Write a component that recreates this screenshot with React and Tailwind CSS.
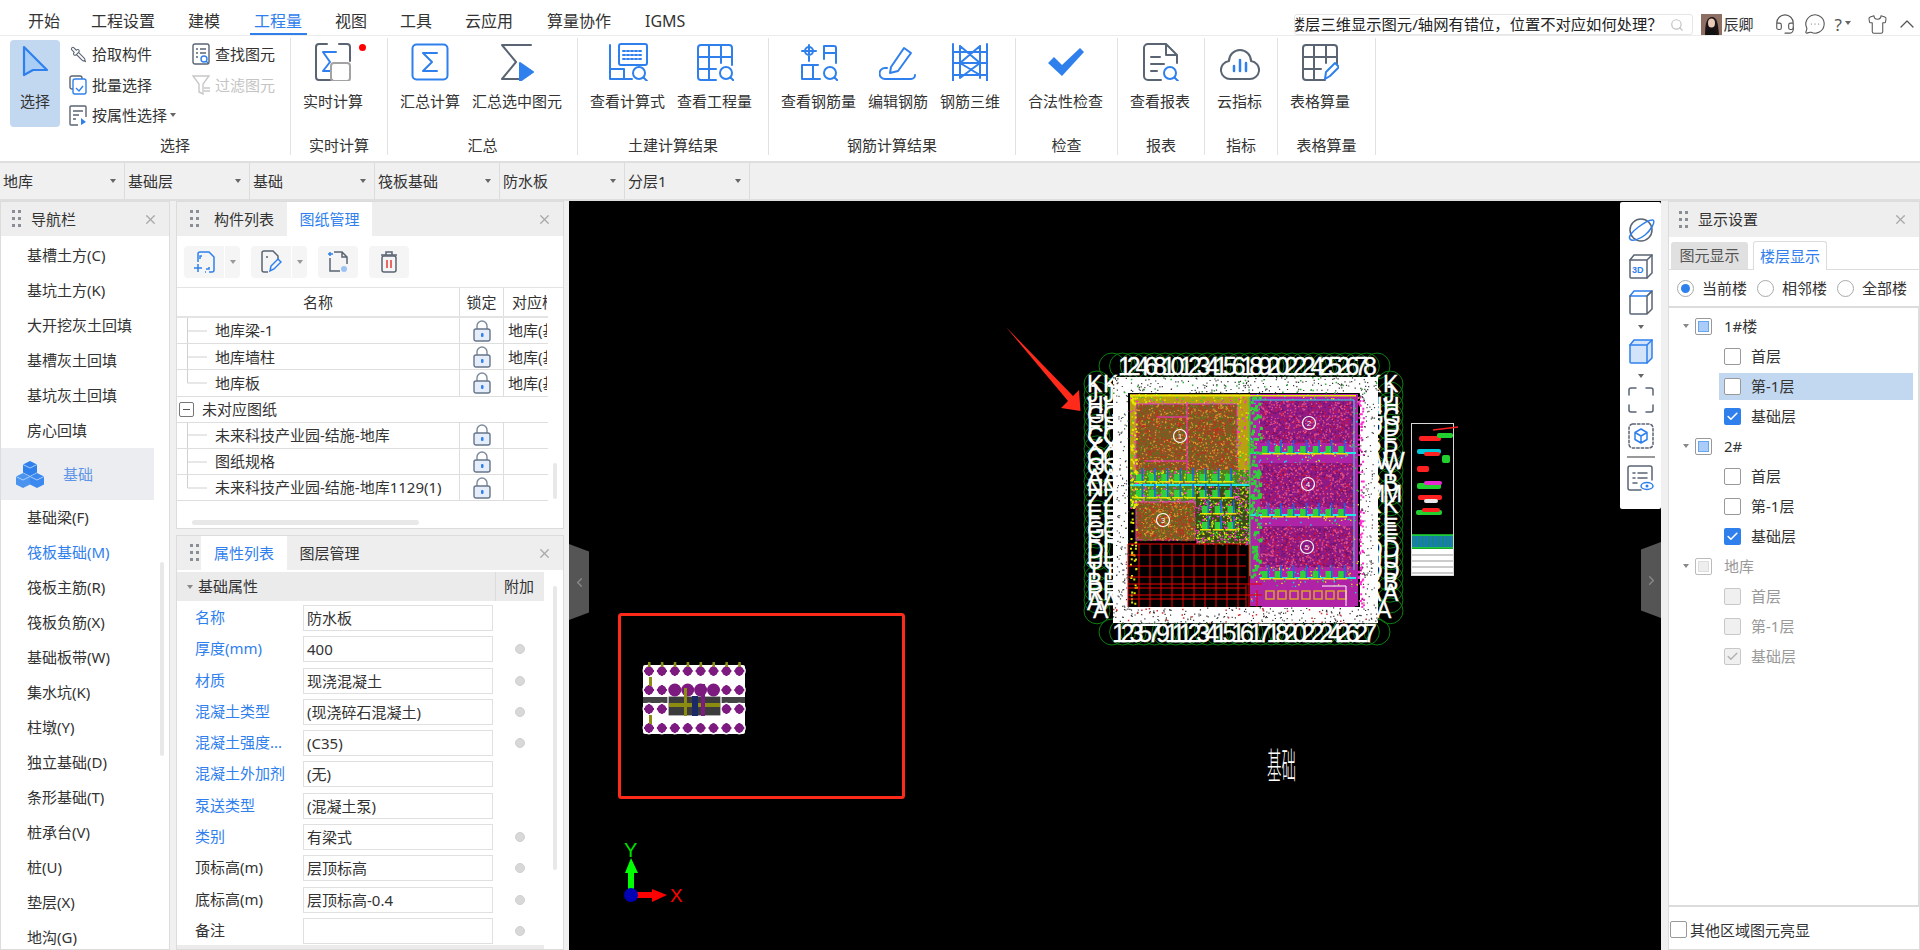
import { Headset, MessageCircleMore, Shirt, ChevronUp, ChevronLeft, ChevronRight, Search, X, Check, Pipette } from 'lucide-react';

const BLUE = '#2f80ed';
const GRAY = '#5a6473';

function Tri({ color = 'border-t-[#666]' }) {
  return <span className={`inline-block h-0 w-0 border-x-[3.5px] border-t-[4px] border-x-transparent ${color}`} />;
}

function Grip() {
  return (
    <svg width="9" height="18" viewBox="0 0 9 18" fill="#8a8f96">
      {[0, 7, 14].map(y => <g key={y}><rect x="0" y={y} width="3" height="3" /><rect x="6" y={y} width="3" height="3" /></g>)}
    </svg>
  );
}

function Ico({ w = 38, h = 38, vb = '0 0 38 38', children }) {
  return <svg width={w} height={h} viewBox={vb} fill="none" strokeWidth="2" strokeLinecap="round" strokeLinejoin="round">{children}</svg>;
}

function Lens({ cx = 29, cy = 30, r = 6, c = BLUE }) {
  return <g stroke={c}><circle cx={cx} cy={cy} r={r} /><path d={`M${cx + r * 0.75} ${cy + r * 0.75}l3.5 3.5`} /></g>;
}

const icons = {
  live: (
    <Ico w={38} h={38}>
      <path d="M13 1H5a3 3 0 0 0-3 3v30a3 3 0 0 0 3 3h8M25 1h8a3 3 0 0 1 3 3v14M18 37h-5" stroke={GRAY} />
      <path d="M22 9H9l7 10-7 9h7" stroke={BLUE} />
      <rect x="17" y="20" width="19" height="18" rx="3" stroke="#a3a3a3" />
    </Ico>
  ),
  sum: (
    <Ico>
      <rect x="1.5" y="1.5" width="35" height="35" rx="4" stroke={BLUE} />
      <path d="M26 10H12l9 9-9 9h14" stroke={BLUE} />
    </Ico>
  ),
  sumSel: (
    <Ico w={36} h={38} vb="0 0 36 38">
      <path d="M32 2H3l14 17L3 36h17" stroke={GRAY} />
      <path d="M21 20l13 9-13 9z" fill={BLUE} stroke={BLUE} />
    </Ico>
  ),
  formula: (
    <Ico w={40} h={38} vb="0 0 40 38">
      <path d="M2 2v34h22M2 26h14v10" stroke={BLUE} />
      <rect x="11" y="1" width="28" height="21" rx="2" stroke={BLUE} />
      <path d="M15 8h20M15 12h20M15 16h20" stroke={BLUE} strokeDasharray="2 2" />
      <Lens cx={31} cy={30} />
    </Ico>
  ),
  qty: (
    <Ico>
      <path d="M20 37H5a3 3 0 0 1-3-3V5a3 3 0 0 1 3-3h28a3 3 0 0 1 3 3v17M2 14h34M2 26h18M13 2v35M25 2v18" stroke={BLUE} />
      <Lens cx={30} cy={30} />
    </Ico>
  ),
  rebar: (
    <Ico>
      <path d="M13 8a4 4 0 1 0-8 0 4 4 0 1 0 8 0M9 2v16M2 8h14M2 22h16M2 36h18M2 22v14M13 22v14M24 16V3h10a2 2 0 0 1 2 2v15M24 10h12" stroke={BLUE} />
      <Lens cx={30} cy={30} />
    </Ico>
  ),
  editRebar: (
    <Ico>
      <path d="M12 24 25 5l7 5-13 18-8 2z" stroke={BLUE} />
      <path d="M8 25H6a5 5 0 0 0 0 11h26a4 4 0 0 0 4-4" stroke={BLUE} />
    </Ico>
  ),
  rebar3d: (
    <Ico>
      <path d="M2 1v37M36 1v37M9 3v32M29 3v32M2 9h34M2 20h34M2 32h34M9 20 29 3M9 35 29 20M9 20l20 12M9 3l20 17" stroke={BLUE} />
    </Ico>
  ),
  check: (
    <svg width="38" height="38" viewBox="0 0 38 38"><path d="M1 20l6-6 8 8L33 5l4 4-22 24z" fill={BLUE} /></svg>
  ),
  report: (
    <Ico>
      <path d="M20 37H7a4 4 0 0 1-4-4V5a4 4 0 0 1 4-4h18l11 11v8M25 1v11h11M10 14h9M10 21h13M10 28h6" stroke={GRAY} />
      <Lens cx={29} cy={30} />
    </Ico>
  ),
  cloud: (
    <Ico w={40} h={38} vb="0 0 40 38">
      <path d="M11 36a9 9 0 0 1-2-18 11 11 0 0 1 22 0 9 9 0 0 1-2 18z" stroke={GRAY} />
      <path d="M14 23v5M20 17v11M26 20v8" stroke={BLUE} strokeWidth="2.5" />
    </Ico>
  ),
  table: (
    <Ico>
      <path d="M24 37H5a3 3 0 0 1-3-3V5a3 3 0 0 1 3-3h28a3 3 0 0 1 3 3v16M2 14h34M2 26h18M13 2v35M25 2v18" stroke={GRAY} />
      <path d="M24 36l1-7 9-9 4 4-9 9z" stroke={BLUE} />
    </Ico>
  ),
  batch: (
    <svg width="18" height="20" viewBox="0 0 18 20" fill="none" strokeWidth="1.4">
      <rect x="1" y="1" width="12" height="13" rx="2" stroke={GRAY} />
      <rect x="4" y="4" width="13" height="15" rx="2" stroke={BLUE} fill="#fff" />
      <path d="M7 13l3 3 4-5" stroke={BLUE} />
    </svg>
  ),
  attr: (
    <svg width="18" height="21" viewBox="0 0 18 21" fill="none" strokeWidth="1.4">
      <path d="M9 20H2a1 1 0 0 1-1-1V2a1 1 0 0 1 1-1h14a1 1 0 0 1 1 1v10M4 6h10M4 10h6M4 14h3" stroke={GRAY} />
      <path d="M12 13l5 4-5 3z" fill={BLUE} />
    </svg>
  ),
  find: (
    <svg width="18" height="22" viewBox="0 0 18 22" fill="none" strokeWidth="1.4">
      <rect x="1" y="1" width="16" height="20" rx="2" stroke={GRAY} />
      <path d="M4 6h2M8 6h6M4 10h2M8 10h6M4 14h2" stroke={GRAY} />
      <circle cx="12" cy="16" r="3" stroke={BLUE} fill="#fff" />
      <path d="M14 18l2 2" stroke={BLUE} />
    </svg>
  ),
  filter: (
    <svg width="18" height="20" viewBox="0 0 18 20" fill="none" strokeWidth="1.4" stroke="#c8c8c8">
      <path d="M1 1h16l-6 8v10l-4-2V9z" />
      <path d="M12 13h6M12 16h6" />
    </svg>
  ),
};

function BigTool({ icon, label, children }) {
  return (
    <div className="flex flex-col items-center pt-[5px]">
      <div className="relative flex h-[38px] items-center justify-center">{icon}{children}</div>
      <div className="mt-[9px] whitespace-nowrap leading-[22px]">{label}</div>
    </div>
  );
}

function Group({ w, label, children }) {
  return (
    <div className={`flex h-[117px] flex-col border-r border-[#e2e2e2] ${w}`}>
      <div className="flex flex-1 gap-3 pl-3">{children}</div>
      <div className="mb-[2px] h-4 text-center leading-4">{label}</div>
    </div>
  );
}

function SmallTool({ icon, label, className = '', children }) {
  return (
    <div className={`flex h-[30.5px] items-center ${className}`}>
      <span className="flex w-[18px] justify-center">{icon}</span>
      <span className="ml-[5px] whitespace-nowrap">{label}</span>
      {children}
    </div>
  );
}

function TopBar() {
  const tabs = [['开始', 'w-[33px] ml-[28px]'], ['工程设置', 'w-[65px] ml-[30px]'], ['建模', 'w-[33px] ml-[32px]'], ['工程量', 'w-[49px] ml-[33px]'], ['视图', 'w-[33px] ml-[32px]'], ['工具', 'w-[33px] ml-[32px]'], ['云应用', 'w-[49px] ml-[32px]'], ['算量协作', 'w-[65px] ml-[33px]'], ['IGMS', 'w-[44px] ml-[33px]']];
  return (
    <div className="flex h-[36px] items-start border-b border-[#ececec] bg-white">
      {tabs.map(([t, c]) => (
        <div key={t} className={`relative h-[35px] whitespace-nowrap pt-[10px] text-[16px] leading-[22px] ${c} ${t === '工程量' ? 'text-[#2f80ed]' : 'text-[#333]'}`}>
          {t}
          {t === '工程量' && <div className="absolute bottom-0 -left-1 -right-1 h-[2.5px] bg-[#2f80ed]" />}
        </div>
      ))}
      <div className="ml-auto mt-[12px] flex items-center">
        <div className="relative h-[21px] w-[399px] overflow-hidden rounded-[3px] border border-[#e5e5e5]">
          <span className="absolute right-[29px] top-0 whitespace-nowrap text-[15.3px] leading-[19px] text-[#222]">楼层三维显示图元/轴网有错位，位置不对应如何处理？</span>
          <Search className="absolute right-[8px] top-[3px] text-[#c2c2c2]" size={14} />
        </div>
        <svg className="ml-[8px]" width="21" height="21" viewBox="0 0 21 21">
          <rect width="21" height="21" fill="#8d6f63" />
          <path d="M4 21c0-12 2-18 7-18s6 6 7 18z" fill="#1c1414" />
          <ellipse cx="10.5" cy="9" rx="3.5" ry="4.5" fill="#e9c9b8" />
          <path d="M5 21c1-5 3-6 5.500-6s4.500 1 5.500 6z" fill="#111" />
        </svg>
        <span className="ml-[2px] mr-[20px] w-[30px] whitespace-nowrap text-[15px] text-[#333]">辰卿</span>
        <Headset size={22} strokeWidth={1.2} className="text-[#555]" />
        <MessageCircleMore size={22} strokeWidth={1.2} className="ml-[8px] text-[#555]" />
        <span className="ml-[9px] text-[17px] leading-none text-[#555]">?</span>
        <span className="ml-[3px] mt-[-2px] flex"><Tri /></span>
        <Shirt size={21} strokeWidth={1.2} className="ml-[16px] text-[#555]" />
        <ChevronUp size={24} strokeWidth={1.3} className="ml-[7px] mr-[1px] text-[#555]" />
      </div>
    </div>
  );
}

function Ribbon() {
  return (
    <div className="flex h-[125px] items-start bg-white pt-[2px]">
      <div className="flex h-[117px] w-[291px] flex-col border-r border-[#e2e2e2]">
        <div className="flex flex-1 pl-[10px] pt-[1px]">
          <div className="mt-[1px] flex h-[87px] w-[50px] flex-col items-center rounded-[4px] bg-[#c2d8f0] pt-[5px]">
            <svg width="27" height="32" viewBox="0 0 27 32" fill="#a9cdf5" stroke={BLUE} strokeWidth="2.2" strokeLinejoin="round"><path d="M2 2l23 23H11L2 30z" /></svg>
            <div className="mt-[13px] leading-[22px]">选择</div>
          </div>
          <div className="ml-[9px] flex w-[123px] flex-col">
            <SmallTool icon={<Pipette size={17} strokeWidth={1.5} className="scale-x-[-1] text-[#5a6473]" />} label="拾取构件" />
            <SmallTool icon={icons.batch} label="批量选择" />
            <SmallTool icon={icons.attr} label="按属性选择"><span className="ml-[3px] flex"><Tri /></span></SmallTool>
          </div>
          <div className="flex flex-col">
            <SmallTool icon={icons.find} label="查找图元" />
            <SmallTool icon={icons.filter} label="过滤图元" className="text-[#c4c4c4]" />
          </div>
        </div>
        <div className="mb-[2px] h-4 pl-[60px] text-center leading-4">选择</div>
      </div>
      <Group w="w-[97px]" label="实时计算">
        <BigTool icon={icons.live} label="实时计算">
          <span className="absolute -right-[14px] top-[1px] h-[7px] w-[7px] rounded-full bg-[#ff0000]" />
        </BigTool>
      </Group>
      <Group w="w-[190px]" label="汇总">
        <BigTool icon={icons.sum} label="汇总计算" />
        <BigTool icon={icons.sumSel} label="汇总选中图元" />
      </Group>
      <Group w="w-[191px]" label="土建计算结果">
        <BigTool icon={icons.formula} label="查看计算式" />
        <BigTool icon={icons.qty} label="查看工程量" />
      </Group>
      <Group w="w-[247px]" label="钢筋计算结果">
        <BigTool icon={icons.rebar} label="查看钢筋量" />
        <BigTool icon={icons.editRebar} label="编辑钢筋" />
        <BigTool icon={icons.rebar3d} label="钢筋三维" />
      </Group>
      <Group w="w-[102px]" label="检查">
        <BigTool icon={icons.check} label="合法性检查" />
      </Group>
      <Group w="w-[87px]" label="报表">
        <BigTool icon={icons.report} label="查看报表" />
      </Group>
      <Group w="w-[73px]" label="指标">
        <BigTool icon={icons.cloud} label="云指标" />
      </Group>
      <Group w="w-[98px]" label="表格算量">
        <BigTool icon={icons.table} label="表格算量" />
      </Group>
    </div>
  );
}

function ComboRow() {
  return (
    <div className="flex h-[40px] border-y-2 border-t-[#dedede] border-b-[#dedede] bg-[#f0f0f0]">
      {['地库', '基础层', '基础', '筏板基础', '防水板', '分层1'].map(t => (
        <div key={t} className="flex w-[125px] items-center justify-between border-r border-[#dcdcdc] pl-[3px] pr-[8px]">
          <span>{t}</span><Tri />
        </div>
      ))}
    </div>
  );
}

const navTop = ['基槽土方(C)', '基坑土方(K)', '大开挖灰土回填', '基槽灰土回填', '基坑灰土回填', '房心回填'];
const navBottom = ['基础梁(F)', '筏板基础(M)', '筏板主筋(R)', '筏板负筋(X)', '基础板带(W)', '集水坑(K)', '柱墩(Y)', '独立基础(D)', '条形基础(T)', '桩承台(V)', '桩(U)', '垫层(X)', '地沟(G)'];

function NavPanel() {
  return (
    <div className="relative w-[170px] overflow-hidden border border-[#dcdcdc] bg-white">
      <div className="flex h-[34px] items-center bg-[#eeeeee] pl-[11px] pr-[11px]">
        <Grip /><span className="ml-[10px]">导航栏</span><X size={15} className="ml-auto text-[#a8a8a8]" />
      </div>
      <div className="pt-[2px]">
        {navTop.map(t => <div key={t} className="flex h-[35px] items-center pl-[26px]">{t}</div>)}
      </div>
      <div className="flex h-[52px] w-[153px] items-center bg-[#ebedf0] pl-[14px]">
        <svg width="30" height="28" viewBox="0 0 30 28">
          <path d="M15 1l7 3.500v8L15 16l-7-3.500v-8z" fill="#2f80ed" />
          <path d="M8 13l7 3.500v8L8 28l-7-3.500v-8z" fill="#4a94f0" />
          <path d="M22 13l7 3.500v8L22 28l-7-3.500v-8z" fill="#3b88ee" />
          <path d="M8 4.500l7 3.500 7-3.500M1 16.500l7 3.500 7-3.500 7 3.500 7-3.500" stroke="#a8cdf8" fill="none" />
        </svg>
        <span className="ml-[18px] text-[#5f95e8]">基础</span>
      </div>
      {navBottom.map(t => (
        <div key={t} className={`flex h-[35px] items-center pl-[26px] ${t.startsWith('筏板基础') ? 'text-[#2f80ed]' : ''}`}>{t}</div>
      ))}
      <div className="absolute left-[159px] top-[360px] h-[194px] w-[4px] rounded bg-[#e8e8e8]" />
    </div>
  );
}

function PanelHead({ tabs, active }) {
  return (
    <div className="flex h-[34px] items-stretch bg-[#eeeeee]">
      <div className="flex w-[24px] items-center justify-end pr-[2px]"><Grip /></div>
      {tabs.map((t, i) => (
        <div key={t} className={`flex items-center justify-center ${i === 0 ? 'w-[86px]' : 'w-[85px]'} ${i === active ? 'bg-white text-[#2f80ed]' : ''}`}>{t}</div>
      ))}
      <X size={15} className="ml-auto mr-[11px] self-center text-[#a8a8a8]" />
    </div>
  );
}

function Lock() {
  return (
    <svg width="18" height="22" viewBox="0 0 18 22" fill="none">
      <path d="M4 10V6a5 5 0 0 1 10 0v4" stroke="#7d8a9c" strokeWidth="1.400" />
      <rect x="1" y="9" width="16" height="12" rx="2" fill="#e4edf9" stroke="#66758a" strokeWidth="1.400" />
      <rect x="8" y="13" width="2.500" height="4" rx="1" fill="#2f80ed" />
    </svg>
  );
}

function Branch({ last }) {
  return (
    <svg className="shrink-0" width="20" height="26" viewBox="0 0 20 26" stroke="#d0d0d0" fill="none">
      <path d={last ? 'M0.500 0V13H20' : 'M0.500 0V26M0 13H20'} />
    </svg>
  );
}

function DrawingRow({ name, floor, last }) {
  return (
    <div className="flex h-[26.2px] items-center border-b border-[#dedede]">
      <div className="flex h-full w-[283px] items-center overflow-hidden whitespace-nowrap border-r border-[#dedede] pl-[10px]">
        <Branch last={last} /><span className="ml-[8px]">{name}</span>
      </div>
      <div className="flex h-full w-[44px] items-center justify-center border-r border-[#dedede]"><Lock /></div>
      <div className="flex w-[43px] overflow-hidden whitespace-nowrap pl-[4px]">{floor}</div>
    </div>
  );
}

function ToolBtn({ icon, caret }) {
  return (
    <div className="flex h-[32px]">
      <div className={`flex w-[40px] items-center justify-center bg-[#f5f5f5] ${caret ? 'rounded-l-[4px]' : 'rounded-[4px]'}`}>{icon}</div>
      {caret && <div className="ml-[1px] flex w-[15px] items-center justify-center rounded-r-[4px] bg-[#f5f5f5]"><Tri color="border-t-[#999]" /></div>}
    </div>
  );
}

function DrawingPanel() {
  const b1 = (
    <svg width="22" height="22" viewBox="0 0 22 22" fill="none" stroke={BLUE} strokeWidth="1.500">
      <path d="M5 11V3a2 2 0 0 1 2-2h9l5 5v13a2 2 0 0 1-2 2h-3M16 16v2h-3M1 17h8M5 13v8M9 5H7v3M13 21h-1" />
    </svg>
  );
  const b2 = (
    <svg width="22" height="24" viewBox="0 0 22 24" fill="none" strokeWidth="1.500">
      <path d="M8 22H4a2 2 0 0 1-2-2V3a2 2 0 0 1 2-2h9l5 5v4M7 6v2" stroke={GRAY} />
      <path d="M10 21l1-5 7-7 3 3-7 7z" stroke={BLUE} />
    </svg>
  );
  const b3 = (
    <svg width="22" height="22" viewBox="0 0 22 22" fill="none" strokeWidth="1.500">
      <path d="M3 7v13h10M7 1h8l5 5v7M20 6h-5V1" stroke={GRAY} />
      <path d="M1 3h5M3 1v4" stroke={BLUE} />
      <circle cx="17" cy="18" r="3" fill="#9cc3f5" />
    </svg>
  );
  const b4 = (
    <svg width="18" height="22" viewBox="0 0 18 22" fill="none" strokeWidth="1.500">
      <rect x="2" y="5" width="14" height="16" rx="2" stroke={GRAY} />
      <path d="M1 4h16M6 4V1h6v3" stroke={GRAY} />
      <path d="M7 9v8M11 9v8" stroke="#e53935" />
    </svg>
  );
  return (
    <div className="relative h-[328px] shrink-0 overflow-hidden border border-[#dcdcdc] bg-white">
      <PanelHead tabs={['构件列表', '图纸管理']} active={1} />
      <div className="flex h-[52px] items-start gap-[11px] border-b border-[#e4e4e4] pl-[7px] pt-[10px]">
        <ToolBtn icon={b1} caret /><ToolBtn icon={b2} caret /><ToolBtn icon={b3} /><ToolBtn icon={b4} />
      </div>
      <div className="w-[371px] overflow-hidden">
        <div className="flex h-[30px] items-center border-b-2 border-[#e4e4e4]">
          <div className="flex h-full w-[283px] items-center justify-center border-r border-[#dedede]">名称</div>
          <div className="flex h-full w-[44px] items-center justify-center border-r border-[#dedede]">锁定</div>
          <div className="w-[43px] overflow-hidden whitespace-nowrap pl-[8px]">对应楼层</div>
        </div>
        <DrawingRow name="地库梁-1" floor="地库(基础层)" />
        <DrawingRow name="地库墙柱" floor="地库(基础层)" />
        <DrawingRow name="地库板" floor="地库(基础层)" last />
        <div className="flex h-[26.2px] items-center whitespace-nowrap border-b border-[#dedede] pl-[2px]">
          <span className="flex h-[15px] w-[15px] items-center justify-center rounded-[2px] border border-[#777]"><span className="h-[1px] w-[7px] bg-[#555]" /></span>
          <span className="ml-[8px]">未对应图纸</span>
        </div>
        <DrawingRow name="未来科技产业园-结施-地库" />
        <DrawingRow name="图纸规格" />
        <DrawingRow name="未来科技产业园-结施-地库1129(1)" last />
      </div>
      <div className="absolute left-[376px] top-[261px] h-[36px] w-[4px] rounded bg-[#e8e8e8]" />
      <div className="absolute left-[15px] top-[318px] h-[5px] w-[227px] rounded bg-[#e8e8e8]" />
    </div>
  );
}

const props = [
  ['名称', '防水板', 1, 0], ['厚度(mm)', '400', 1, 1], ['材质', '现浇混凝土', 1, 1], ['混凝土类型', '(现浇碎石混凝土)', 1, 1],
  ['混凝土强度...', '(C35)', 1, 1], ['混凝土外加剂', '(无)', 1, 0], ['泵送类型', '(混凝土泵)', 1, 0], ['类别', '有梁式', 1, 1],
  ['顶标高(m)', '层顶标高', 0, 1], ['底标高(m)', '层顶标高-0.4', 0, 1], ['备注', '', 0, 1],
];

function PropPanel() {
  return (
    <div className="relative mt-[6px] min-h-0 flex-1 overflow-hidden border border-[#dcdcdc] bg-white">
      <PanelHead tabs={['属性列表', '图层管理']} active={0} />
      <div className="mt-[2px] flex h-[29px] w-[367px] items-center bg-[#ebebeb]">
        <span className="ml-[10px] flex"><Tri color="border-t-[#888]" /></span>
        <span className="ml-[5px]">基础属性</span>
        <span className="ml-auto flex h-full w-[49px] items-center border-l border-[#dcdcdc] pl-[8px]">附加</span>
      </div>
      <div className="pt-[4px]">
        {props.map(([label, value, blue, dot]) => (
          <div key={label} className="flex h-[31.3px] items-start pl-[18px]">
            <div className={`w-[108px] whitespace-nowrap leading-[25px] ${blue ? 'text-[#2f80ed]' : ''}`}>{label}</div>
            <div className="h-[26px] w-[190px] whitespace-nowrap border border-[#e0e0e0] pl-[3px] leading-[24px]">{value}</div>
            {dot ? <span className="ml-[22px] mt-[8px] h-[10px] w-[10px] rounded-full border border-[#cfcfcf] bg-[#d8d8d8]" /> : null}
          </div>
        ))}
      </div>
      <div className="absolute bottom-0 left-0 h-[4px] w-[367px] bg-[#ebebeb]" />
      <div className="absolute left-[376px] top-[50px] h-[284px] w-[4px] rounded bg-[#e8e8e8]" />
    </div>
  );
}

// ---- CAD drawing, built from a seeded generator so every render is the same ----
function rng(seed) {
  let s = seed;
  return () => (s = (s * 16807) % 2147483647) / 2147483647;
}

function dots(seed, x, y, w, h, n, size = 1.4) {
  const r = rng(seed);
  let d = '';
  for (let i = 0; i < n; i++) {
    d += `M${(x + r() * w).toFixed(1)} ${(y + r() * h).toFixed(1)}h${size}v${size}h-${size}z`;
  }
  return d;
}

function Zone({ seed, x, y, w, h, base, colors, n = 500, edge }) {
  return (
    <g>
      <rect x={x} y={y} width={w} height={h} fill={base} stroke={edge} />
      {colors.map((c, i) => <path key={c} d={dots(seed + i * 37, x, y, w, h, n)} fill={c} />)}
    </g>
  );
}

function Marker({ x, y, label }) {
  return (
    <g>
      <circle cx={x} cy={y} r="6.500" fill="none" stroke="#fff" strokeWidth="1.200" />
      <text x={x} y={y + 3} textAnchor="middle" fontSize="8" fill="#fff" fontFamily="Liberation Sans">{label}</text>
    </g>
  );
}

function Piles({ x0, x1, y, step = 12.700 }) {
  const out = [];
  for (let x = x0; x <= x1; x += step) {
    out.push(<rect key={`g${x}`} x={x} y={y} width="7" height="7" fill="#2fd03a" />);
    out.push(<rect key={`b${x}`} x={x + 5.500} y={y - 6} width="1.500" height="13" fill="#1664e8" />);
    out.push(<rect key={`y${x}`} x={x - 2} y={y + 7} width="11" height="1.500" fill="#e8e800" />);
  }
  return <g>{out}</g>;
}

function range(n) {
  return Array.from({ length: n }, (_, i) => i);
}

function MainPlan() {
  const ringL = 'KJHGFCXQOANZLEGFDUTBRA';
  const ringR = 'KJHGDFPWYBMKLEFDUDBA';
  return (
    <g>
      {/* scalloped outline */}
      <g fill="none" stroke="#0c7d12" strokeWidth="1">
        {range(26).map(i => <g key={i}><circle cx={1112 + i * 10.600} cy={366} r="13" /><circle cx={1112 + i * 10.600} cy={632} r="13" /></g>)}
        {range(22).map(i => <g key={i}><circle cx={1097} cy={384 + i * 10.800} r="13" /><circle cx={1390} cy={384 + i * 10.800} r="13" /></g>)}
      </g>
      {/* axis ring */}
      <rect x="1113" y="377" width="265" height="246" fill="#fff" />
      <rect x="1128" y="393" width="232" height="214" fill="#000" />
      {/* hatched zones */}
      <Zone seed={21} x={1130} y={394} w={120} h={82} base="#b8a010" colors={['#2fd03a', '#e8e800', '#ff2ad0']} n={280} />
      <Zone seed={31} x={1136} y={404} w={101} h={67} base="#8a5524" colors={['#d99a2b', '#c22c1c', '#59701f']} n={620} edge="#e23ad8" />
      <Zone seed={41} x={1130} y={470} w={120} h={38} base="#4f7f20" colors={['#2fd03a', '#e8e800', '#ff2ad0']} n={300} />
      <Zone seed={51} x={1136} y={502} w={59} h={38} base="#8a5524" colors={['#d99a2b', '#c22c1c', '#59701f']} n={340} edge="#ff40e0" />
      <Zone seed={61} x={1196} y={486} w={54} h={58} base="#3d4a18" colors={['#2fd03a', '#e8e800', '#ff2ad0']} n={220} />
      <Zone seed={71} x={1250} y={394} w={108} h={212} base="#b022a6" colors={['#2fd03a', '#00e6e6', '#e8e800']} n={220} />
      <Zone seed={81} x={1260} y={400} w={93} h={43} base="#8f1a86" colors={['#d0143c', '#6a1470', '#e0508a']} n={340} />
      <Zone seed={91} x={1260} y={463} w={93} h={44} base="#8f1a86" colors={['#d0143c', '#6a1470', '#e0508a']} n={340} />
      <Zone seed={101} x={1260} y={526} w={93} h={41} base="#8f1a86" colors={['#d0143c', '#6a1470', '#e0508a']} n={320} />
      <path d="M1157 417h30v44h-42M1187 417v-13M1187 461v10" stroke="#ff2ad0" fill="none" />
      {/* pile strips */}
      <rect x="1130" y="484" width="120" height="2" fill="#22e6e6" />
      <Piles x0={1136} x1={1236} y={474} />
      <Piles x0={1136} x1={1236} y={490} />
      <Piles x0={1202} x1={1236} y={506} />
      <Piles x0={1202} x1={1236} y={522} />
      <rect x="1250" y="452" width="106" height="2" fill="#22e6e6" />
      <rect x="1250" y="514" width="106" height="2" fill="#22e6e6" />
      <rect x="1260" y="577" width="96" height="2" fill="#22e6e6" />
      <Piles x0={1262} x1={1345} y={446} />
      <Piles x0={1262} x1={1345} y={509} />
      <Piles x0={1262} x1={1345} y={571} />
      <rect x="1249" y="396" width="1.500" height="180" fill="#2fd03a" />
      <path d="M1252 400h102v170" stroke="#22e6e6" fill="none" />
      <rect x="1130" y="395" width="226" height="1.500" fill="#e8e800" />
      <path d={dots(111, 1250, 396, 10, 180, 110, 3)} fill="#2fd03a" />
      <path d={dots(112, 1130, 394, 6, 210, 90, 2)} fill="#e8e800" />
      <path d={dots(113, 1358, 394, 5, 212, 90, 2)} fill="#ff2ad0" />
      {/* red grid of the lower left bay */}
      <g stroke="#ee0000" strokeWidth="1">
        {range(12).map(i => <path key={i} d={`M${1128 + i * 11} 544V607`} />)}
        {range(6).map(i => <path key={i} d={`M1128 ${544 + i * 11}H1246`} />)}
        <path d="M1246 585V607M1257 590V607" />
        <path d="M1128 584H1262M1128 595H1262" />
      </g>
      {/* lower right bay */}
      <rect x="1262" y="587" width="93" height="20" fill="#b022a6" />
      <g fill="none" stroke="#d9a02a" strokeWidth="1.500">
        {range(7).map(i => <rect key={i} x={1266 + i * 12} y={591} width="8" height="8" />)}
      </g>
      <path d="M1322 586h24v20" stroke="#fff" fill="none" />
      <Marker x={1180} y={436} label="1" />
      <Marker x={1163} y={520} label="3" />
      <Marker x={1309} y={423} label="2" />
      <Marker x={1308} y={484} label="4" />
      <Marker x={1307} y={547} label="5" />
      {/* axis labels */}
      <g fill="#fff" fontFamily="Liberation Sans" fontSize="25" stroke="#fff" strokeWidth="0.300">
        <text x="1118" y="375" textLength="259">12468101234156189202224252678</text>
        <text x="1112" y="642" textLength="265">123579111234151617182022242627</text>
        <text x="1093" y="618" fontSize="23">A</text>
        <text x="1376" y="618" fontSize="23">A</text>
      </g>
      <g fill="#fff" fontFamily="Liberation Sans" stroke="#fff" strokeWidth="0.300">
        {ringL.split('').map((c, i) => <text key={i} x={1087} y={392 + i * 10.400} fontSize="23">{c}</text>)}
        {ringL.split('').map((c, i) => <text key={i} x={1103} y={392 + i * 10.400} fontSize="23">{c}</text>)}
        {ringR.split('').map((c, i) => <text key={i} x={1366} y={392 + i * 11} fontSize="23">{c}</text>)}
        {ringR.split('').map((c, i) => <text key={i} x={1383} y={392 + i * 11} fontSize="23">{c}</text>)}
      </g>
      {/* axis bubble specks on top of the ring */}
      <path d={dots(11, 1113, 377, 265, 16, 190, 1.200)} fill="#333" />
      <path d={dots(12, 1113, 607, 265, 16, 190, 1.200)} fill="#333" />
      <path d={dots(13, 1116, 393, 12, 214, 130, 1.200)} fill="#444" />
      <path d={dots(14, 1360, 393, 14, 214, 130, 1.200)} fill="#444" />
      <path d={dots(15, 1113, 377, 265, 16, 40, 1.500)} fill="#2fae3a" />
      <path d={dots(16, 1113, 607, 265, 16, 40, 1.500)} fill="#d03030" />
    </g>
  );
}

function SideSheet() {
  const blobs = [[1423, 436, 22, 5, '#ff2020'], [1441, 433, 16, 5, '#22d030'], [1421, 449, 24, 5, '#00c8d8'], [1428, 452, 16, 4, '#ff2020'], [1446, 455, 8, 8, '#22d030'], [1421, 466, 12, 6, '#ff2020'], [1421, 483, 24, 6, '#22d030'], [1428, 481, 18, 4, '#e828d0'], [1422, 495, 24, 5, '#ff2020'], [1428, 499, 14, 4, '#e8e8e8'], [1420, 510, 26, 5, '#22d030'], [1426, 508, 18, 4, '#ff2020']];
  return (
    <g>
      <rect x="1411.500" y="423.500" width="42" height="152" fill="#000" stroke="#d8d8d8" />
      {blobs.map(([x, y, w, h, c], i) => <rect key={i} x={x - 4} y={y} width={w} height={h} rx="2" fill={c} />)}
      <path d="M1433 430l25-3" stroke="#ff2020" strokeWidth="1.500" />
      <rect x="1412" y="535" width="41" height="13" fill="#0f8a7a" />
      <path d="M1412 535h41M1412 548h41" stroke="#22e030" strokeWidth="1.500" />
      {range(12).map(i => <path key={i} d={`M${1414 + i * 3.400} 536v11`} stroke="#2a6cf0" />)}
      <rect x="1412" y="549" width="41" height="26" fill="#fff" />
      {range(4).map(i => <path key={i} d={`M1412 ${555 + i * 6}h41`} stroke="#999" />)}
    </g>
  );
}

function SmallPlan() {
  const xs = range(8).map(i => 649 + i * 12.900);
  const ys = [671, 690, 709, 728];
  return (
    <g>
      <rect x="643" y="665" width="102" height="69" rx="2" fill="#fff" />
      <rect x="643" y="697" width="102" height="6" fill="#444" />
      {ys.map(y => xs.map(x => (
        <g key={`${x}-${y}`}>
          <circle cx={x} cy={y} r="6.500" fill="#fff" />
          <path d={`M${x - 5} ${y}h10M${x} ${y - 5}v10`} stroke="#7d1a80" strokeWidth="2" />
          <circle cx={x} cy={y} r="4.500" fill="#7d1a80" />
        </g>
      )))}
      {xs.map(x => <rect key={x} x={x - 1} y={662} width="2.500" height="5" fill="#8c8c10" />)}
      <rect x="668" y="696" width="53" height="20" fill="#3c3c3c" stroke="#fff" strokeWidth="1.200" />
      {xs.slice(2, 6).map(x => <circle key={x} cx={x} cy={690} r="6.500" fill="#7d1a80" />)}
      <rect x="669" y="703" width="51" height="4" fill="#8c8c10" />
      <rect x="684" y="688" width="3" height="28" fill="#8c8c10" />
      <rect x="701" y="684" width="4" height="32" fill="#7d1a80" />
      <rect x="649" y="677" width="3" height="9" fill="#8c8c10" />
      <rect x="649" y="715" width="3" height="9" fill="#8c8c10" />
      <rect x="692" y="696" width="6" height="20" fill="#1b2a66" />
    </g>
  );
}

function Canvas() {
  return (
    <div className="relative min-w-0 flex-1 bg-black">
      <svg className="block h-full w-full" viewBox="569 201 1092 749" preserveAspectRatio="none">
        <MainPlan />
        <SideSheet />
        <path d="M1006 327 L1073 396 L1079 390 L1080.500 411 L1061 408 L1068 401 z" fill="#ff2a1a" />
        <rect x="619.500" y="614.500" width="284" height="183" rx="2" fill="none" stroke="#ff2a1a" strokeWidth="3" />
        <SmallPlan />
        <text transform="translate(1267 779) scale(0.5 1.250)" fill="#fff" fontSize="29" fontWeight="300" fontFamily="Noto Sans CJK SC">基础</text>
        <rect x="628" y="872" width="6" height="20" fill="#00ff00" />
        <path d="M631 858l7 15h-13z" fill="#00ff00" />
        <rect x="636" y="892" width="16" height="6" fill="#ff0000" />
        <path d="M667 895l-15 7v-13z" fill="#ff0000" />
        <circle cx="631" cy="895" r="7" fill="#0000b4" />
        <text x="624" y="857" fill="#00e000" fontSize="20" fontFamily="Liberation Sans">Y</text>
        <text x="670" y="902" fill="#ff0000" fontSize="19" fontFamily="Liberation Sans">X</text>
      </svg>
      <div className="absolute left-0 top-[343px] flex h-[76px] w-[20px] items-center justify-center bg-[#555] [clip-path:polygon(0_0,100%_10%,100%_90%,0_100%)]">
        <ChevronLeft size={15} className="text-[#8a8a8a]" />
      </div>
      <div className="absolute right-0 top-[341px] flex h-[76px] w-[20px] items-center justify-center bg-[#555] [clip-path:polygon(0_10%,100%_0,100%_100%,0_90%)]">
        <ChevronRight size={15} className="text-[#8a8a8a]" />
      </div>
      <ViewBar />
    </div>
  );
}

function ViewBar() {
  const s = { fill: 'none', strokeWidth: 1.500, strokeLinejoin: 'round', strokeLinecap: 'round' };
  return (
    <div className="absolute right-0 top-[1px] flex h-[307px] w-[41px] flex-col items-center rounded-[2px] bg-white pt-[10px]">
      <div className="flex h-[36px] items-center">
        <svg width="28" height="26" viewBox="0 0 28 26" {...s}>
          <ellipse cx="14" cy="13" rx="11" ry="11" stroke={GRAY} />
          <path d="M3 22C-1 17 21 2 26 3c3 2-3 11-8 15S5 25 3 22z" stroke={BLUE} />
        </svg>
      </div>
      <div className="flex h-[36px] items-center">
        <svg width="26" height="26" viewBox="0 0 26 26" {...s}>
          <path d="M6 2h18v18l-5 5H3a1 1 0 0 1-1-1V7z" stroke={GRAY} />
          <path d="M2 7h17v18M19 7l5-5" stroke={GRAY} />
          <text x="4" y="20" fontSize="9" fontWeight="700" fill={BLUE} stroke="none" fontFamily="Liberation Sans">3D</text>
        </svg>
      </div>
      <div className="flex h-[36px] items-center">
        <svg width="26" height="26" viewBox="0 0 26 26" {...s}>
          <path d="M6 2h18L19 7H2z" stroke={BLUE} />
          <path d="M2 7v17a1 1 0 0 0 1 1h16V7l5-5v18l-5 5" stroke={GRAY} />
        </svg>
      </div>
      <div className="flex h-[14px] items-center"><Tri /></div>
      <div className="flex h-[34px] items-center">
        <svg width="26" height="26" viewBox="0 0 26 26" {...s}>
          <path d="M6 2h18v18l-5 5H3a1 1 0 0 1-1-1V7z" stroke={BLUE} fill="#d3e4fa" />
          <path d="M2 7h17v18M19 7l5-5" stroke={BLUE} />
        </svg>
      </div>
      <div className="flex h-[16px] items-center"><Tri /></div>
      <div className="flex h-[32px] items-center">
        <svg width="26" height="26" viewBox="0 0 26 26" {...s} stroke={GRAY}>
          <path d="M1 8V3a2 2 0 0 1 2-2h5M18 1h5a2 2 0 0 1 2 2v5M25 18v5a2 2 0 0 1-2 2h-5M8 25H3a2 2 0 0 1-2-2v-5" />
        </svg>
      </div>
      <div className="flex h-[40px] items-center">
        <svg width="26" height="26" viewBox="0 0 26 26" {...s}>
          <rect x="1" y="1" width="24" height="24" rx="4" stroke={GRAY} strokeDasharray="2.500 2" />
          <path d="M13 6l6 3.500v7L13 20l-6-3.500v-7zM7 9.500l6 3.500 6-3.500M13 13v7" stroke={BLUE} />
        </svg>
      </div>
      <div className="h-[1.500px] w-[28px] bg-[#999]" />
      <div className="flex h-[40px] items-center">
        <svg width="27" height="26" viewBox="0 0 27 26" {...s}>
          <path d="M14 25H3a2 2 0 0 1-2-2V3a2 2 0 0 1 2-2h20a2 2 0 0 1 2 2v12M6 8h2M11 8h9M6 13h2M11 13h9M6 18h4" stroke={GRAY} />
          <ellipse cx="20" cy="21" rx="6" ry="3.500" stroke={BLUE} fill="#fff" />
          <circle cx="20" cy="21" r="1.500" fill={BLUE} stroke="none" />
        </svg>
      </div>
    </div>
  );
}

function Radio({ on, label }) {
  return (
    <div className="flex items-center">
      <span className="flex h-[17px] w-[17px] items-center justify-center rounded-full border border-[#aaa] bg-white">
        {on && <span className="h-[9px] w-[9px] rounded-full bg-[#2f80ed]" />}
      </span>
      <span className="ml-[8px]">{label}</span>
    </div>
  );
}

function Box({ kind }) {
  if (kind === 'checked') return <span className="flex h-[17px] w-[17px] shrink-0 items-center justify-center rounded-[2px] bg-[#2f80ed]"><Check size={13} strokeWidth={3} className="text-white" /></span>;
  if (kind === 'partial') return <span className="flex h-[17px] w-[17px] shrink-0 items-center justify-center rounded-[2px] border border-[#999] bg-white"><span className="h-[11px] w-[11px] border border-[#6aa6f0] bg-[#a9cdf8]" /></span>;
  if (kind === 'partialOff') return <span className="flex h-[17px] w-[17px] shrink-0 items-center justify-center rounded-[2px] border border-[#bbb] bg-white"><span className="h-[11px] w-[11px] border border-[#ddd] bg-[#eeeeee]" /></span>;
  if (kind === 'off') return <span className="h-[17px] w-[17px] shrink-0 rounded-[2px] border border-[#c8c8c8] bg-[#f0f0f0]" />;
  if (kind === 'checkedOff') return <span className="flex h-[17px] w-[17px] shrink-0 items-center justify-center rounded-[2px] border border-[#c8c8c8] bg-[#f0f0f0]"><Check size={13} strokeWidth={2.500} className="text-[#b0b0b0]" /></span>;
  return <span className="h-[17px] w-[17px] shrink-0 rounded-[2px] border border-[#999] bg-white" />;
}

function FloorGroup({ label, state, muted, rows }) {
  return (
    <>
      <div className={`flex h-[30px] items-center pl-[14px] ${muted ? 'text-[#999]' : ''}`}>
        <Tri color="border-t-[#888]" />
        <span className="ml-[6px] flex"><Box kind={state} /></span>
        <span className="ml-[12px]">{label}</span>
      </div>
      {rows.map(([t, kind, hi]) => (
        <div key={t} className={`ml-[50px] flex h-[30px] items-center pl-[5px] ${muted ? 'text-[#999]' : ''}`}>
          <div className={`flex h-[27px] w-full items-center ${hi ? '-ml-[5px] pl-[5px] bg-[#c2d8f0]' : ''}`}>
            <Box kind={kind} /><span className="ml-[10px]">{t}</span>
          </div>
        </div>
      ))}
    </>
  );
}

function DisplayPanel() {
  return (
    <div className="ml-[7px] flex w-[252px] flex-col overflow-hidden border border-[#dcdcdc] bg-white">
      <div className="flex h-[35px] shrink-0 items-center bg-[#eeeeee] pl-[10px] pr-[11px]">
        <Grip /><span className="ml-[10px]">显示设置</span><X size={15} className="ml-auto text-[#a8a8a8]" />
      </div>
      <div className="flex h-[33px] shrink-0 items-end gap-[5px] border-b border-[#dcdcdc] pl-[2px]">
        <div className="flex h-[27px] w-[77px] items-center justify-center rounded-t-[3px] bg-[#e0e0e0] text-[#555]">图元显示</div>
        <div className="-mb-[1px] flex h-[29px] w-[74px] items-center justify-center rounded-t-[3px] border border-b-0 border-[#dcdcdc] bg-white text-[#2f80ed]">楼层显示</div>
      </div>
      <div className="flex h-[36px] shrink-0 items-center gap-[10px] pl-[8px]">
        <Radio on label="当前楼" /><Radio label="相邻楼" /><Radio label="全部楼" />
      </div>
      <div className="h-[601px] w-[251px] shrink-0 border-y-2 border-r-2 border-[#dcdcdc] pt-[3px]">
        <FloorGroup label="1#楼" state="partial" rows={[['首层'], ['第-1层', undefined, true], ['基础层', 'checked']]} />
        <FloorGroup label="2#" state="partial" rows={[['首层'], ['第-1层'], ['基础层', 'checked']]} />
        <FloorGroup label="地库" state="partialOff" muted rows={[['首层', 'off'], ['第-1层', 'off'], ['基础层', 'checkedOff']]} />
      </div>
      <div className="flex flex-1 items-start pl-[1px] pt-[14px]">
        <Box /><span className="ml-[3px] leading-[19px]">其他区域图元亮显</span>
      </div>
    </div>
  );
}

export default function App() {
  return (
    <div className="flex h-[950px] w-[1920px] flex-col overflow-hidden bg-[#f0f0f0] font-['Noto_Sans','Noto_Sans_CJK_SC',sans-serif] text-[15px] text-[#333]">
      <TopBar />
      <Ribbon />
      <ComboRow />
      <div className="flex min-h-0 flex-1">
        <NavPanel />
        <div className="ml-[6px] flex w-[388px] flex-col">
          <DrawingPanel />
          <PropPanel />
        </div>
        <div className="ml-[5px] flex min-w-0 flex-1">
          <Canvas />
        </div>
        <DisplayPanel />
      </div>
    </div>
  );
}
